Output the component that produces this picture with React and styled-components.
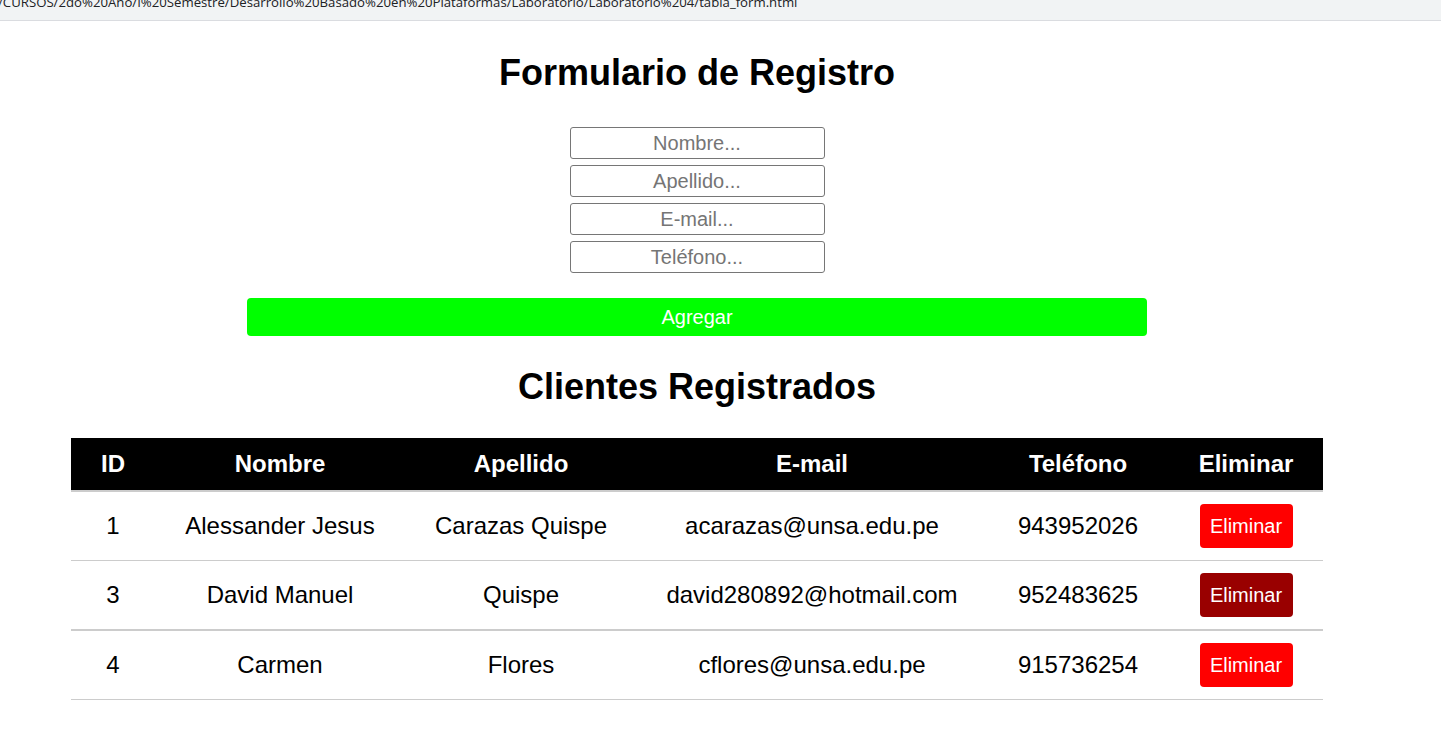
import React from "react";
import styled, { createGlobalStyle } from "styled-components";

const Global = createGlobalStyle`
  html, body { margin: 0; padding: 0; background: #fff; }
  body { font-family: "Liberation Sans", Arial, sans-serif; color: #000; }
`;

const UrlBar = styled.div`
  height: 20px;
  background: #f1f3f4;
  border-bottom: 1px solid #dadce0;
  overflow: hidden;
  white-space: nowrap;
`;

const UrlText = styled.div`
  font-family: "Open Sans", "Noto Sans", sans-serif;
  font-size: 13.2px;
  line-height: 20px;
  margin-top: -8px;
  margin-left: -2px;
  color: #202124;
`;

const Page = styled.main`
  width: 1394px;
  display: flex;
  flex-direction: column;
  align-items: center;
`;

const Title = styled.h1`
  font-size: 36px;
  font-weight: bold;
  margin: 31px 0 0;
  line-height: 41px;
`;

const Form = styled.form`
  display: flex;
  flex-direction: column;
  align-items: center;
  gap: 6px;
  margin-top: 34px;
`;

const Input = styled.input`
  box-sizing: border-box;
  width: 255px;
  height: 32px;
  border: 1px solid #767676;
  border-radius: 3px;
  font-family: "Liberation Sans", Arial, sans-serif;
  font-size: 20px;
  text-align: center;
  padding: 0 4px;
  &::placeholder { color: #757575; }
`;

const AddButton = styled.button`
  width: 900px;
  height: 38px;
  margin-top: 25px;
  background: #00ff00;
  border: none;
  border-radius: 4px;
  color: #fff;
  font-family: "Liberation Sans", Arial, sans-serif;
  font-size: 20px;
`;

const Subtitle = styled.h2`
  font-size: 36px;
  font-weight: bold;
  margin: 30px 0 0;
  line-height: 41px;
`;

const Table = styled.table`
  width: 1252px;
  margin-top: 31px;
  border-collapse: collapse;
  table-layout: fixed;
  font-size: 24px;
`;

const Th = styled.th`
  background: #000;
  color: #fff;
  font-weight: bold;
  height: 52px;
  padding: 0;
  text-align: center;
  border-bottom: 2px solid #cccccc;
`;

const Td = styled.td`
  text-align: center;
  padding: 0;
  height: ${p => p.$h}px;
`;

const Tr = styled.tr`
  border-bottom: ${p => (p.$thick ? 2 : 1)}px solid #cccccc;
`;

const DeleteButton = styled.button`
  background: ${p => (p.$active ? "#990000" : "#ff0000")};
  color: #fff;
  border: none;
  border-radius: 4px;
  font-family: "Liberation Sans", Arial, sans-serif;
  font-size: 20px;
  height: 44px;
  width: 93px;
  padding: 0;
`;

const columns = [
  { label: "ID", w: 84 },
  { label: "Nombre", w: 250 },
  { label: "Apellido", w: 232 },
  { label: "E-mail", w: 350 },
  { label: "Teléfono", w: 182 },
  { label: "Eliminar", w: 154 },
];

const clients = [
  { id: 1, nombre: "Alessander Jesus", apellido: "Carazas Quispe", email: "acarazas@unsa.edu.pe", tel: "943952026" },
  { id: 3, nombre: "David Manuel", apellido: "Quispe", email: "david280892@hotmail.com", tel: "952483625", active: true },
  { id: 4, nombre: "Carmen", apellido: "Flores", email: "cflores@unsa.edu.pe", tel: "915736254" },
];

export default function App() {
  return (
    <>
      <Global />
      <UrlBar>
        <UrlText>/CURSOS/2do%20Año/I%20Semestre/Desarrollo%20Basado%20en%20Plataformas/Laboratorio/Laboratorio%204/tabla_form.html</UrlText>
      </UrlBar>
      <Page>
        <Title>Formulario de Registro</Title>
        <Form onSubmit={e => e.preventDefault()}>
          <Input placeholder="Nombre..." />
          <Input placeholder="Apellido..." />
          <Input placeholder="E-mail..." />
          <Input placeholder="Teléfono..." />
        </Form>
        <AddButton type="button">Agregar</AddButton>
        <Subtitle>Clientes Registrados</Subtitle>
        <Table>
          <colgroup>
            {columns.map(c => (
              <col key={c.label} style={{ width: c.w }} />
            ))}
          </colgroup>
          <thead>
            <tr>
              {columns.map(c => (
                <Th key={c.label}>{c.label}</Th>
              ))}
            </tr>
          </thead>
          <tbody>
            {clients.map(c => (
              <Tr key={c.id} $thick={c.active}>
                <Td $h={68}>{c.id}</Td>
                <Td $h={68}>{c.nombre}</Td>
                <Td $h={68}>{c.apellido}</Td>
                <Td $h={68}>{c.email}</Td>
                <Td $h={68}>{c.tel}</Td>
                <Td $h={68}>
                  <DeleteButton $active={c.active}>Eliminar</DeleteButton>
                </Td>
              </Tr>
            ))}
          </tbody>
        </Table>
      </Page>
    </>
  );
}
